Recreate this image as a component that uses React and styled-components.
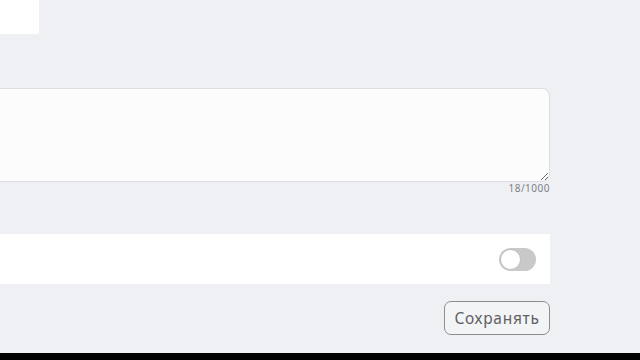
import React, { useState } from "react";
import styled, { createGlobalStyle } from "styled-components";

const Global = createGlobalStyle`
  html, body { margin: 0; padding: 0; }
  body { background: #eff0f4; font-family: "Noto Sans", "Open Sans", sans-serif; overflow: hidden; }
`;

const Page = styled.div`
  width: 640px;
  height: 360px;
  display: flex;
  flex-direction: column;
  background: #eff0f4;
`;

const Content = styled.div`
  flex: 1;
  display: flex;
  flex-direction: column;
  width: 570px;
  margin-left: -20px;
`;

const TopBlock = styled.div`
  width: 59px;
  height: 34px;
  background: #ffffff;
  border-bottom-right-radius: 2px;
`;

const Field = styled.div`
  margin-top: 54px;
  display: flex;
  flex-direction: column;
`;

const TextArea = styled.textarea`
  box-sizing: border-box;
  width: 100%;
  height: 94px;
  background: #fcfcfc;
  border: 1px solid #dcdde0;
  border-radius: 8px;
  outline: none;
  resize: vertical;
  font-family: inherit;
`;

const Counter = styled.div`
  align-self: flex-end;
  margin-top: 1px;
  font-size: 10px;
  line-height: 11px;
  letter-spacing: 0.5px;
  color: #7e7f83;
  font-family: "Noto Sans", sans-serif;
`;

const SwitchRow = styled.div`
  margin-top: 40px;
  height: 50px;
  background: #ffffff;
  display: flex;
  align-items: center;
  justify-content: flex-end;
  padding-right: 14px;
`;

const Track = styled.button`
  position: relative;
  width: 37px;
  height: 23px;
  border: none;
  border-radius: 12px;
  padding: 0;
  background: ${(p) => (p.$on ? "#4caf50" : "#c9c9c9")};
  cursor: pointer;
`;

const Knob = styled.span`
  position: absolute;
  top: 1px;
  left: ${(p) => (p.$on ? "15px" : "1px")};
  width: 19px;
  height: 19px;
  border-radius: 50%;
  background: #ffffff;
  border: 1px solid #bdbdbd;
`;

const Actions = styled.div`
  margin-top: 17px;
  display: flex;
  justify-content: flex-end;
`;

const SaveButton = styled.button`
  box-sizing: border-box;
  height: 34px;
  width: 106px;
  background: #f3f4f6;
  border: 1px solid #8c8d91;
  border-radius: 7px;
  font-family: "Noto Sans", sans-serif;
  font-size: 15.5px;
  font-weight: 400;
  color: #5f6064;
  letter-spacing: 0.7px;
  padding: 0;
`;

const BottomBar = styled.div`
  height: 7px;
  background: #000000;
`;

export default function App() {
  const [on, setOn] = useState(false);
  return (
    <Page>
      <Global />
      <Content>
        <TopBlock />
        <Field>
          <TextArea defaultValue="" />
          <Counter>18/1000</Counter>
        </Field>
        <SwitchRow>
          <Track $on={on} onClick={() => setOn(!on)}>
            <Knob $on={on} />
          </Track>
        </SwitchRow>
        <Actions>
          <SaveButton>Сохранять</SaveButton>
        </Actions>
      </Content>
      <BottomBar />
    </Page>
  );
}
